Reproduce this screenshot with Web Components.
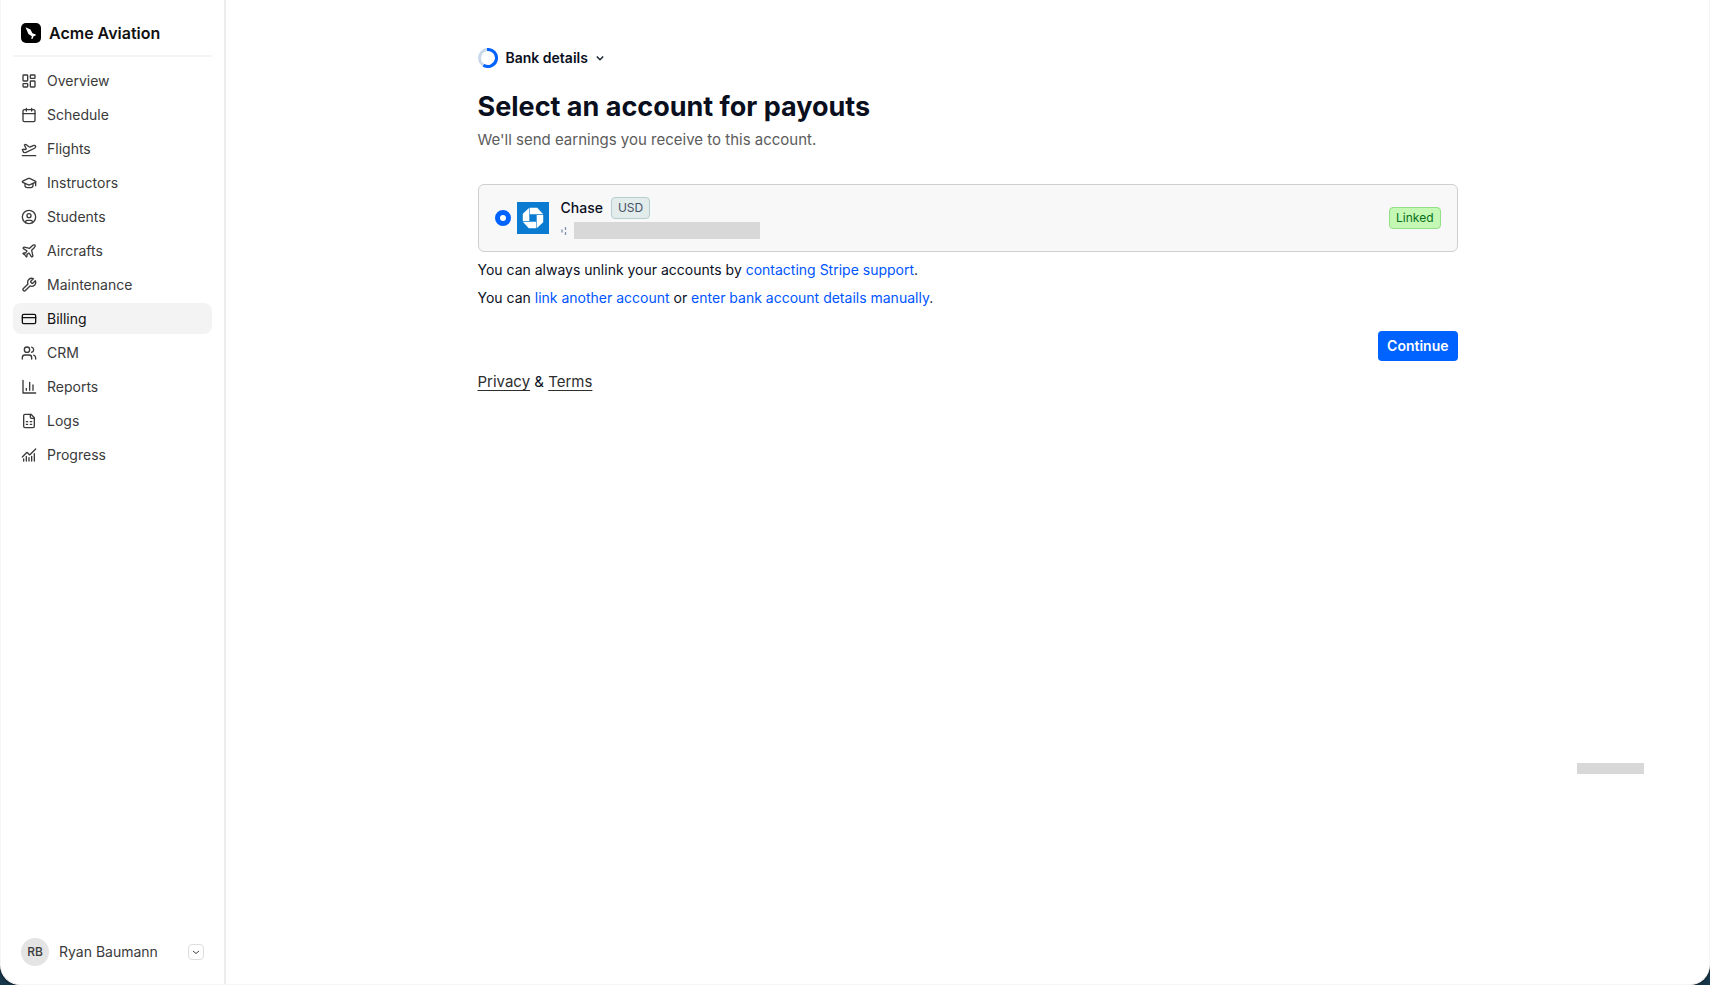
<!DOCTYPE html>
<html lang="en">
<head>
<meta charset="utf-8">
<title>Acme Aviation</title>
<style>
  html, body { margin: 0; height: 100%; }
  body { background: #17384b; font-family: Inter, "Noto Sans", sans-serif; font-size: 14px; line-height: 20px; color: #0a0f1e; }
</style>
</head>
<body>

<app-shell>
  <side-bar slot="sidebar" org="Acme Aviation" active="Billing"></side-bar>
  <payout-page>
    <step-progress slot="step">Bank details</step-progress>
    <span slot="title">Select an account for payouts</span>
    <span slot="subtitle">We'll send earnings you receive to this account.</span>
    <bank-account bank="Chase" currency="USD" status="Linked"></bank-account>
  </payout-page>
</app-shell>

<script>
const ICONS = {
  overview: '<rect x="3" y="3" width="7" height="9" rx="1"/><rect x="14" y="3" width="7" height="5" rx="1"/><rect x="14" y="12" width="7" height="9" rx="1"/><rect x="3" y="16" width="7" height="5" rx="1"/>',
  schedule: '<path d="M8 2v4M16 2v4M3 10h18"/><rect x="3" y="4" width="18" height="18" rx="2"/>',
  flights: '<path d="M2 22h20"/><path d="M6.36 17.4 4 17l-2-4 1.1-.55a2 2 0 0 1 1.8 0l.17.1a2 2 0 0 0 1.8 0L8 12 5 6l.9-.45a2 2 0 0 1 2.09.2l4.02 3a2 2 0 0 0 2.1.2l4.19-2.06a2.41 2.41 0 0 1 1.73-.17L21 7a1.4 1.4 0 0 1 .87 1.99l-.38.76c-.23.46-.6.84-1.07 1.08L7.58 17.2a2 2 0 0 1-1.22.18Z"/>',
  instructors: '<path d="M21.42 10.922a1 1 0 0 0-.019-1.838L12.83 5.18a2 2 0 0 0-1.66 0L2.6 9.08a1 1 0 0 0 0 1.832l8.57 3.908a2 2 0 0 0 1.66 0z"/><path d="M22 10v6M6 12.5V16a6 3 0 0 0 12 0v-3.5"/>',
  students: '<circle cx="12" cy="12" r="10"/><circle cx="12" cy="10" r="3"/><path d="M7 20.662V19a2 2 0 0 1 2-2h6a2 2 0 0 1 2 2v1.662"/>',
  aircrafts: '<path d="M17.8 19.2 16 11l3.5-3.5C21 6 21.5 4 21 3c-1-.5-3 0-4.5 1.5L13 8 4.8 6.2c-.5-.1-.9.1-1.1.5l-.3.5c-.2.5-.1 1 .3 1.3L9 12l-2 3H4l-1 1 3 2 2 3 1-1v-3l3-2 3.5 5.3c.3.4.8.5 1.3.3l.5-.2c.4-.3.6-.7.5-1.2z"/>',
  maintenance: '<path d="M14.7 6.3a1 1 0 0 0 0 1.4l1.6 1.6a1 1 0 0 0 1.4 0l3.77-3.77a6 6 0 0 1-7.94 7.94l-6.91 6.91a2.12 2.12 0 0 1-3-3l6.91-6.91a6 6 0 0 1 7.94-7.94l-3.76 3.76z"/>',
  billing: '<rect x="2" y="5" width="20" height="14" rx="2"/><path d="M2 10h20"/>',
  crm: '<path d="M16 21v-2a4 4 0 0 0-4-4H6a4 4 0 0 0-4 4v2"/><circle cx="9" cy="7" r="4"/><path d="M22 21v-2a4 4 0 0 0-3-3.87M16 3.13a4 4 0 0 1 0 7.75"/>',
  reports: '<path d="M3 2v19h19M8 17v-3M13 17V5M18 17V9"/>',
  logs: '<path d="M15 2H6a2 2 0 0 0-2 2v16a2 2 0 0 0 2 2h12a2 2 0 0 0 2-2V7z"/><path d="M14 2v4a2 2 0 0 0 2 2h4M8 13h2M14 13h2M8 17h2M14 17h2"/>',
  progress: '<path d="M12 16v5M16 14v7M20 10v11M22 3l-8.646 8.646a.5.5 0 0 1-.708 0L9.354 8.354a.5.5 0 0 0-.707 0L2 15M4 18v3M8 14v7"/>'
};

const NAV = ['Overview', 'Schedule', 'Flights', 'Instructors', 'Students', 'Aircrafts',
  'Maintenance', 'Billing', 'CRM', 'Reports', 'Logs', 'Progress'];

class AppShell extends HTMLElement {
  constructor() {
    super();
    this.attachShadow({ mode: 'open' });
    this.shadowRoot.innerHTML = `
      <style>
        :host {
          display: grid;
          grid-template-columns: 225px 1fr;
          min-height: 100vh;
          box-sizing: border-box;
          background: #fff;
          border: 1px solid #f5f5f5;
          border-top: 0;
          border-radius: 0 0 20px 20px;
          box-shadow: 0 0 3px #000;
          overflow: hidden;
        }
      </style>
      <slot name="sidebar"></slot>
      <slot></slot>
    `;
  }
}

class SideBar extends HTMLElement {
  constructor() {
    super();
    this.attachShadow({ mode: 'open' });
    const org = this.getAttribute('org');
    const active = this.getAttribute('active');

    this.shadowRoot.innerHTML = `
      <style>
        :host {
          display: flex;
          flex-direction: column;
          box-sizing: border-box;
          padding: 12px;
          border-right: 2px solid #ededed;
          color: #3a3a3a;
        }
        header {
          display: flex;
          align-items: center;
          gap: 8px;
          padding: 11px 8px 12px;
          border-bottom: 2px solid #f4f4f4;
          font-size: 16px;
          font-weight: 600;
          color: #111;
        }
        nav { flex: 1; display: flex; flex-direction: column; gap: 3px; padding-top: 8px; }
      </style>
      <header>
        <svg width="20" height="20" viewBox="0 0 20 20" aria-hidden="true">
          <rect width="20" height="20" rx="5" fill="#000"/>
          <path d="M4.5 4.3 9.5 6.4 11.4 10.2 14.8 11.4 14.7 12.6 12.6 13.2 11.6 15.8 10.2 16 10.8 13.3 7.4 11z" fill="#fff"/>
        </svg>
        ${org}
      </header>
      <nav>
        ${NAV.map(n => `<nav-item icon="${n.toLowerCase()}"${n === active ? ' active' : ''}>${n}</nav-item>`).join('')}
      </nav>
      <user-menu initials="RB">Ryan Baumann</user-menu>
    `;
  }
}

class NavItem extends HTMLElement {
  constructor() {
    super();
    this.attachShadow({ mode: 'open' });
  }

  connectedCallback() {
    this.shadowRoot.innerHTML = `
      <style>
        :host { display: block; }
        a {
          display: flex;
          align-items: center;
          gap: 10px;
          height: 31px;
          padding: 0 8px;
          border-radius: 8px;
          color: inherit;
          text-decoration: none;
        }
        :host([active]) a { background: #f3f3f3; color: #111; }
        svg { fill: none; stroke: currentColor; stroke-width: 2; stroke-linecap: round; stroke-linejoin: round; }
      </style>
      <a href="#${this.getAttribute('icon')}">
        <svg width="16" height="16" viewBox="0 0 24 24" aria-hidden="true">${ICONS[this.getAttribute('icon')]}</svg>
        <slot></slot>
      </a>
    `;
  }
}

class UserMenu extends HTMLElement {
  constructor() {
    super();
    this.attachShadow({ mode: 'open' });
  }

  connectedCallback() {
    this.shadowRoot.innerHTML = `
      <style>
        :host { display: flex; align-items: center; gap: 10px; padding: 6px 8px; }
        .avatar {
          display: grid;
          place-items: center;
          width: 28px;
          height: 28px;
          border-radius: 50%;
          background: #e4e4e4;
          font-size: 12px;
          font-weight: 500;
        }
        .name { flex: 1; }
        button {
          display: grid;
          place-items: center;
          box-sizing: border-box;
          width: 16px;
          height: 16px;
          padding: 0;
          border: 1px solid #dedede;
          border-radius: 4px;
          background: #fff;
        }
      </style>
      <span class="avatar">${this.getAttribute('initials')}</span>
      <span class="name"><slot></slot></span>
      <button aria-label="Account menu">
        <svg width="8" height="8" viewBox="0 0 8 8" fill="none" stroke="#444" aria-hidden="true"><path d="M1 3l3 2.5L7 3"/></svg>
      </button>
    `;
  }
}

class PayoutPage extends HTMLElement {
  constructor() {
    super();
    this.attachShadow({ mode: 'open' });
    this.shadowRoot.innerHTML = `
      <style>
        :host { display: block; position: relative; padding: 48px 40px 40px; }
        main { max-width: 980px; margin: 0 auto; }
        h1 { margin: 21px 0 0; font-size: 27px; line-height: 36px; font-weight: 700; }
        .subtitle { margin: 3px 0 32px; font-size: 15px; line-height: 24px; color: #5c5c5c; }
        .note { margin: 8px 0; }
        .note a { color: #0055ff; text-decoration: none; }
        .actions { display: flex; justify-content: flex-end; margin-top: 23px; }
        button {
          height: 30px;
          padding: 0 9px;
          border: 0;
          border-radius: 4px;
          background: #0062ff;
          color: #fff;
          font: inherit;
          font-weight: 600;
        }
        footer { margin-top: 9px; font-size: 15px; line-height: 24px; }
        footer a { color: #2e2e2e; text-underline-offset: 3px; text-decoration-skip-ink: none; }
        .pill { position: absolute; right: 65px; bottom: 210px; width: 67px; height: 11px; background: #d8d8d8; }
      </style>
      <main>
        <slot name="step"></slot>
        <h1><slot name="title"></slot></h1>
        <p class="subtitle"><slot name="subtitle"></slot></p>
        <slot></slot>
        <p class="note">You can always unlink your accounts by <a href="#support">contacting Stripe support</a>.</p>
        <p class="note">You can <a href="#link">link another account</a> or <a href="#manual">enter bank account details manually</a>.</p>
        <div class="actions"><button>Continue</button></div>
        <footer><a href="#privacy">Privacy</a> &amp; <a href="#terms">Terms</a></footer>
      </main>
      <div class="pill"></div>
    `;
  }
}

class StepProgress extends HTMLElement {
  constructor() {
    super();
    this.attachShadow({ mode: 'open' });
    this.shadowRoot.innerHTML = `
      <style>
        :host { display: block; }
        button {
          display: flex;
          align-items: center;
          gap: 8px;
          padding: 0;
          border: 0;
          background: none;
          color: inherit;
          font: inherit;
          font-weight: 600;
        }
      </style>
      <button>
        <svg width="20" height="20" viewBox="0 0 20 20" fill="none" stroke-width="3" aria-hidden="true">
          <circle cx="10" cy="10" r="8.5" stroke="#c8d8e8"/>
          <path d="M9 1.56A8.5 8.5 0 1 1 5.4 17.15" stroke="#0062ff"/>
        </svg>
        <slot></slot>
        <svg width="8" height="8" viewBox="0 0 8 8" fill="none" stroke="#1c2433" stroke-width="1.5" aria-hidden="true"><path d="M.8 2.5 4 5.7l3.2-3.2"/></svg>
      </button>
    `;
  }
}

class BankAccount extends HTMLElement {
  constructor() {
    super();
    this.attachShadow({ mode: 'open' });
    this.shadowRoot.innerHTML = `
      <style>
        :host {
          display: flex;
          align-items: center;
          box-sizing: border-box;
          height: 68px;
          padding: 0 16px;
          border: 1px solid #cfcfcf;
          border-radius: 6px;
          background: #f8f8f8;
        }
        input {
          appearance: none;
          width: 16px;
          height: 16px;
          margin: 0 6px 0 0;
          border: 5px solid #0062ff;
          border-radius: 50%;
          background: #fff;
        }
        label { display: flex; align-items: center; gap: 12px; flex: 1; }
        .name { display: flex; align-items: center; gap: 8px; font-weight: 500; }
        .number { display: flex; align-items: center; gap: 7px; padding-top: 3px; }
        .mask { width: 186px; height: 17px; background: #d8d8d8; }
        .badge {
          border: 1px solid;
          border-radius: 4px;
          padding: 0 6px;
          font-size: 12px;
          font-weight: 400;
        }
        .currency { color: #475067; background: #e2eceb; border-color: #b8cdd0; }
        .status { color: #087018; background: #c4f8b4; border-color: #93df86; }
      </style>
      <input type="radio" id="account" name="account" checked>
      <label for="account">
        <svg width="32" height="32" viewBox="0 0 32 32" aria-hidden="true">
          <rect width="32" height="32" fill="#0a7bd1"/>
          <g fill="#fff">
            <path d="M12.9 5.8H20.2l6 6.5H12.9z"/>
            <path d="M12.9 5.8H20.2l6 6.5H12.9z" transform="rotate(90 16 16)"/>
            <path d="M12.9 5.8H20.2l6 6.5H12.9z" transform="rotate(180 16 16)"/>
            <path d="M12.9 5.8H20.2l6 6.5H12.9z" transform="rotate(270 16 16)"/>
          </g>
        </svg>
        <span>
          <span class="name">${this.getAttribute('bank')} <span class="badge currency">${this.getAttribute('currency')}</span></span>
          <span class="number">
            <svg width="6" height="8" viewBox="0 0 6 8" stroke="#7d92ad" stroke-width="1.3" aria-hidden="true"><path d="M1 2.5v3M4.5 0v3M4.5 5v3"/></svg>
            <span class="mask"></span>
          </span>
        </span>
      </label>
      <span class="badge status">${this.getAttribute('status')}</span>
    `;
  }
}

customElements.define('nav-item', NavItem);
customElements.define('user-menu', UserMenu);
customElements.define('side-bar', SideBar);
customElements.define('step-progress', StepProgress);
customElements.define('bank-account', BankAccount);
customElements.define('payout-page', PayoutPage);
customElements.define('app-shell', AppShell);
</script>
</body>
</html>
